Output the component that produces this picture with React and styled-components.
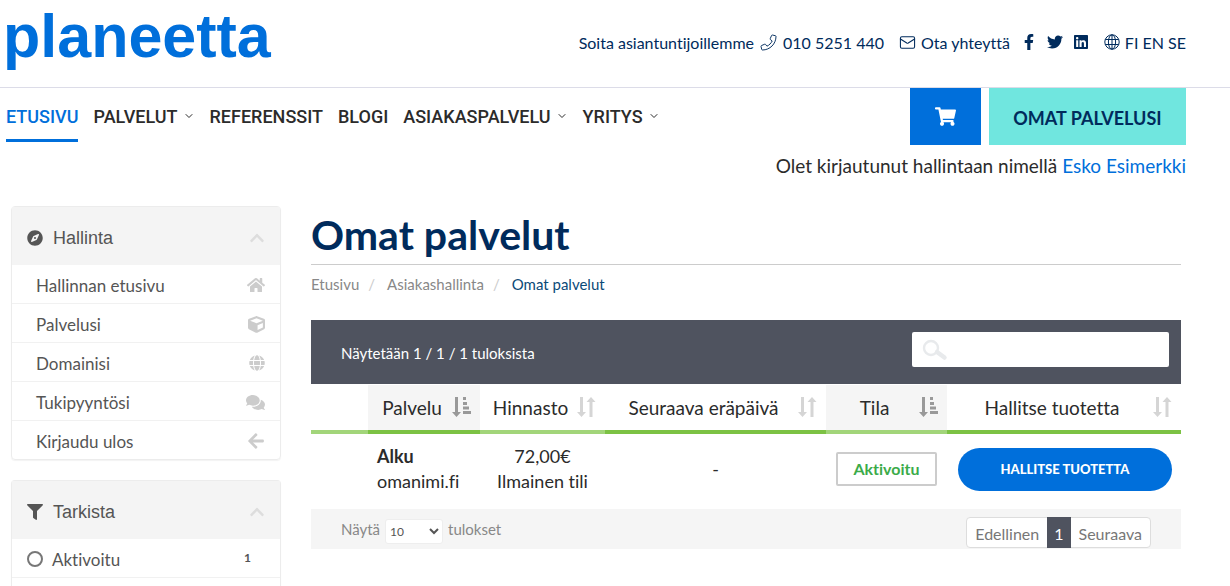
import React from 'react';
import styled, { createGlobalStyle, css } from 'styled-components';
import {
  FaArrowLeft,
  FaChevronUp,
  FaComments,
  FaCompass,
  FaCube,
  FaFacebookF,
  FaFilter,
  FaGlobe,
  FaHome,
  FaLinkedin,
  FaPhone,
  FaShoppingCart,
  FaTwitter,
} from 'react-icons/fa';
import { ChevronDown, Mail } from 'lucide-react';

const blue = '#006fdb';
const navy = '#002b5c';
const slate = '#4f535f';

const GlobalStyle = createGlobalStyle`
  * {
    box-sizing: border-box;
  }

  body {
    margin: 0;
    background: #fff;
    color: #2b2b2b;
    font-family: Lato, "Liberation Sans", sans-serif;
    font-size: 18px;
    font-variant-ligatures: none;
  }

  a {
    color: inherit;
    text-decoration: none;
  }
`;

const Page = styled.div`
  display: flex;
  flex-direction: column;
  min-height: 100vh;
`;

const TopBar = styled.header`
  display: flex;
  justify-content: space-between;
  height: 88px;
  padding: 0 44px 0 3px;
  border-bottom: 1px solid #dcdce8;
`;

const Logo = styled.a`
  color: ${blue};
  font-family: "Liberation Sans", sans-serif;
  font-size: 61px;
  font-weight: 700;
  line-height: 72px;
`;

const Contact = styled.div`
  display: flex;
  align-items: center;
  gap: 15px;
  height: 84px;
  color: ${navy};
  font-size: 16px;
`;

const ContactItem = styled.div`
  display: flex;
  align-items: center;
  gap: 5px;
`;

const Social = styled.div`
  display: flex;
  align-items: center;
  gap: 10px;
  margin-left: -4px;

  a {
    display: flex;
  }
`;

const OutlinePhone = styled(FaPhone)`
  fill: none;
  stroke: ${navy};
  stroke-width: 32px;
  overflow: visible;
  margin: 0 2px;
`;

const NavRow = styled.div`
  display: flex;
  justify-content: space-between;
  padding: 0 44px 0 6px;
`;

const Nav = styled.nav`
  display: flex;
  gap: 15px;
  height: 54px;
`;

const NavLink = styled.a`
  display: flex;
  align-items: center;
  gap: 5px;
  padding-top: 5px;
  border-bottom: 3px solid transparent;
  font-family: Roboto, "Liberation Sans", sans-serif;
  font-size: 18px;
  font-weight: 500;

  ${props => props.$active && css`
    color: ${blue};
    border-color: ${blue};
  `}
`;

const NavActions = styled.div`
  display: flex;
  gap: 8px;
`;

const CartButton = styled.button`
  display: flex;
  align-items: center;
  justify-content: center;
  width: 71px;
  height: 57px;
  border: 0;
  background: ${blue};
  color: #fff;
  font-size: 21px;
`;

const ServicesLink = styled.a`
  display: flex;
  align-items: center;
  justify-content: center;
  width: 197px;
  height: 57px;
  padding-top: 3px;
  background: #70e6df;
  color: ${navy};
  font-size: 18px;
  font-weight: 700;
`;

const LoginInfo = styled.div`
  padding: 8px 44px 0;
  font-size: 19px;
  line-height: 26px;
  text-align: right;

  a {
    color: ${blue};
  }
`;

const Content = styled.div`
  display: flex;
  flex: 1;
  gap: 30px;
  padding: 27px 49px 0 11px;
`;

const Sidebar = styled.aside`
  display: flex;
  flex-direction: column;
  gap: 20px;
  flex: 0 0 270px;
`;

const Panel = styled.section`
  border: 1px solid #ececec;
  border-radius: 4px;
  box-shadow: 0 1px 1px rgba(0, 0, 0, 0.05);
  color: #555;

  ${props => props.$fill && css`
    flex: 1;
    border-bottom: 0;
    border-radius: 4px 4px 0 0;
  `}
`;

const PanelHead = styled.h2`
  display: flex;
  align-items: center;
  gap: 10px;
  height: 58px;
  margin: 0;
  padding: 4px 15px 0;
  background: #f4f4f4;
  font-family: "Liberation Sans", sans-serif;
  font-size: 18px;
  font-weight: 400;
`;

const ToggleButton = styled.button`
  display: flex;
  margin-left: auto;
  padding: 0;
  border: 0;
  background: none;
  color: #ddd;
  font-size: 16px;
`;

const PanelRow = styled.a`
  display: flex;
  align-items: center;
  justify-content: space-between;
  height: 39px;
  padding: 2px 15px 0 24px;
  border-bottom: 1px solid #f1f1f1;
  font-size: 17px;

  &:last-child:not(label) {
    height: 38px;
    border-bottom: 0;
  }

  svg {
    color: #ccc;
  }
`;

const FilterRow = styled(PanelRow).attrs({ as: 'label' })`
  padding: 2px 29px 0 15px;
  justify-content: flex-start;
  gap: 9px;
`;

const Radio = styled.input`
  appearance: none;
  width: 16px;
  height: 16px;
  margin: 0;
  border: 2px solid #777;
  border-radius: 50%;
`;

const Count = styled.span`
  margin-left: auto;
  padding-bottom: 4px;
  font-size: 12px;
  font-weight: 700;
`;

const Main = styled.main`
  flex: 1;
  min-width: 0;
`;

const Title = styled.h1`
  margin: 0;
  border-bottom: 1px solid #ccc;
  color: ${navy};
  font-size: 41px;
  font-weight: 700;
  line-height: 58px;
`;

const Breadcrumb = styled.ol`
  display: flex;
  gap: 9px;
  margin: 0;
  padding: 8px 0 25px;
  list-style: none;
  color: #888;
  font-size: 15px;
  line-height: 22px;

  li + li::before {
    content: '/';
    margin-right: 12px;
    color: #ccc;
  }

  li:last-child {
    color: #0b4a78;
  }
`;

const TableInfo = styled.div`
  display: flex;
  align-items: center;
  justify-content: space-between;
  height: 64px;
  padding: 2px 12px 0 30px;
  margin-bottom: 1px;
  background: ${slate};
  color: #fff;
  font-size: 15px;
`;

const SearchBox = styled.label`
  display: flex;
  align-items: center;
  gap: 8px;
  width: 257px;
  height: 35px;
  margin-bottom: 7px;
  padding: 0 10px;
  border-radius: 2px;
  background: #fff;
`;

const SearchInput = styled.input`
  flex: 1;
  min-width: 0;
  border: 0;
  outline: 0;
  font: inherit;
`;

const Table = styled.table`
  width: 100%;
  table-layout: fixed;
  border-collapse: collapse;
`;

const Th = styled.th`
  height: 47px;
  padding: 0;
  border-bottom: 4px solid ${props => (props.$light ? '#a2d57a' : '#7cc244')};
  background: ${props => (props.$sorted ? '#f5f5f5' : '#fff')};
  font-size: 19px;
  font-weight: 400;
`;

const SortButton = styled.button`
  display: flex;
  align-items: center;
  width: 100%;
  padding: 0 9px 0 4px;
  border: 0;
  background: none;
  color: inherit;
  font: inherit;
  line-height: 24px;

  span {
    flex: 1;
    text-align: center;
    white-space: nowrap;
  }

  svg {
    flex: none;
    margin-bottom: 2px;
  }
`;

const Td = styled.td`
  height: 77px;
  padding: 0 9px 5px;
  border-top: 1px solid #ddd;
  text-align: ${props => props.$align || 'center'};
  line-height: 25px;
`;

const Status = styled.span`
  display: block;
  width: 101px;
  margin: 0 auto;
  border: 2px solid #ccc;
  border-radius: 2px;
  color: #3bab49;
  font-size: 16px;
  font-weight: 700;
  line-height: 30px;
`;

const ManageButton = styled.button`
  display: block;
  width: 214px;
  height: 43px;
  margin-left: auto;
  border: 0;
  border-radius: 22px;
  background: ${blue};
  color: #fff;
  font-family: inherit;
  font-size: 13px;
  font-weight: 900;
`;

const TableFooter = styled.div`
  display: flex;
  justify-content: space-between;
  height: 40px;
  padding: 0 30px;
  background: #f5f5f5;
  color: #888;
  font-size: 15px;
`;

const LengthLabel = styled.label`
  display: flex;
  align-items: center;
  gap: 5px;
`;

const LengthSelect = styled.select`
  width: 58px;
  height: 25px;
  margin-top: 4px;
  border: 1px solid #eee;
  border-radius: 3px;
  background: #fff;
  color: #555;
  font-family: inherit;
  font-size: 12px;
`;

const Pager = styled.div`
  display: flex;
  height: 31px;
  margin-top: 8px;
  border: 1px solid #ddd;
  border-radius: 4px;
  background: #fff;
`;

const PageButton = styled.button`
  margin: ${props => (props.$current ? '-1px 0' : '0')};
  padding: 2px ${props => (props.$current ? 7 : 8)}px 0;
  border: 0;
  background: ${props => (props.$current ? slate : 'none')};
  color: ${props => (props.$current ? '#fff' : '#777')};
  font-family: inherit;
  font-size: 16px;
`;

const GlobeOutline = () => (
  <svg width="16" height="16" viewBox="0 0 16 16" fill="none" stroke="currentColor">
    <circle cx="8" cy="8" r="7.2" />
    <ellipse cx="8" cy="8" rx="3.6" ry="7.2" />
    <path d="M1.3 5.5h13.4M1.3 10.5h13.4M8 1v14" />
  </svg>
);

const SearchIcon = () => (
  <svg width="26" height="22" viewBox="0 0 26 22" fill="none" stroke="#e8eaec">
    <circle cx="9" cy="9" r="7" strokeWidth="2.4" />
    <path d="M15 13l7.5 5.5" strokeWidth="4.5" strokeLinecap="round" />
  </svg>
);

const SortIcon = ({ sorted }) => (
  <svg width="19" height="20" viewBox="0 0 19 20" fill={sorted ? '#999' : '#d5d5d5'}>
    <path d="M3 0h3v15h3l-4.5 5L0 15h3z" />
    {sorted ? (
      <path d="M11 0h3v3h-3zM11 5h4v3h-4zM11 9.500h6v3h-6zM11 14h8v3h-8z" />
    ) : (
      <path d="M12.500 20h3V5h3L14 0 9.500 5h3z" />
    )}
  </svg>
);

const navItems = [
  { label: 'ETUSIVU', active: true },
  { label: 'PALVELUT', menu: true },
  { label: 'REFERENSSIT' },
  { label: 'BLOGI' },
  { label: 'ASIAKASPALVELU', menu: true },
  { label: 'YRITYS', menu: true },
];

const sideItems = [
  { label: 'Hallinnan etusivu', icon: <FaHome size={18} /> },
  { label: 'Palvelusi', icon: <FaCube size={17} /> },
  { label: 'Domainisi', icon: <FaGlobe size={16} /> },
  { label: 'Tukipyyntösi', icon: <FaComments size={19} /> },
  { label: 'Kirjaudu ulos', icon: <FaArrowLeft size={18} /> },
];

const columns = [
  { label: 'Palvelu', width: 112, sorted: true },
  { label: 'Hinnasto', width: 125, light: true },
  { label: 'Seuraava eräpäivä', width: 221 },
  { label: 'Tila', width: 121, sorted: true, light: true },
  { label: 'Hallitse tuotetta', width: 234 },
];

const App = () => (
  <Page>
    <GlobalStyle />
    <TopBar>
      <Logo href="#">planeetta</Logo>
      <Contact>
        <ContactItem>
          Soita asiantuntijoillemme
          <OutlinePhone size={15} />
          <a href="#puhelin">010 5251 440</a>
        </ContactItem>
        <ContactItem as="a" href="#yhteys">
          <Mail size={17} strokeWidth={1.5} />
          Ota yhteyttä
        </ContactItem>
        <Social>
          <a href="#facebook" aria-label="Facebook"><FaFacebookF size={16} /></a>
          <a href="#twitter" aria-label="Twitter"><FaTwitter size={16} /></a>
          <a href="#linkedin" aria-label="LinkedIn"><FaLinkedin size={16} /></a>
        </Social>
        <ContactItem>
          <GlobeOutline />
          <span><a href="#fi">FI</a> <a href="#en">EN</a> <a href="#se">SE</a></span>
        </ContactItem>
      </Contact>
    </TopBar>

    <NavRow>
      <Nav>
        {navItems.map(item => (
          <NavLink key={item.label} href="#" $active={item.active}>
            {item.label}
            {item.menu && <ChevronDown size={12} strokeWidth={2} />}
          </NavLink>
        ))}
      </Nav>
      <NavActions>
        <CartButton aria-label="Ostoskori"><FaShoppingCart /></CartButton>
        <ServicesLink href="#">OMAT PALVELUSI</ServicesLink>
      </NavActions>
    </NavRow>
    <LoginInfo>
      Olet kirjautunut hallintaan nimellä <a href="#">Esko Esimerkki</a>
    </LoginInfo>

    <Content>
      <Sidebar>
        <Panel>
          <PanelHead>
            <FaCompass size={16} />
            Hallinta
            <ToggleButton aria-label="Piilota"><FaChevronUp /></ToggleButton>
          </PanelHead>
          {sideItems.map(item => (
            <PanelRow key={item.label} href="#">
              {item.label}
              {item.icon}
            </PanelRow>
          ))}
        </Panel>
        <Panel $fill>
          <PanelHead>
            <FaFilter size={16} />
            Tarkista
            <ToggleButton aria-label="Piilota"><FaChevronUp /></ToggleButton>
          </PanelHead>
          <FilterRow>
            <Radio type="radio" name="tila" />
            Aktivoitu
            <Count>1</Count>
          </FilterRow>
        </Panel>
      </Sidebar>

      <Main>
        <Title>Omat palvelut</Title>
        <Breadcrumb>
          <li><a href="#">Etusivu</a></li>
          <li><a href="#">Asiakashallinta</a></li>
          <li>Omat palvelut</li>
        </Breadcrumb>

        <TableInfo>
          Näytetään 1 / 1 / 1 tuloksista
          <SearchBox>
            <SearchIcon />
            <SearchInput type="text" aria-label="Haku" />
          </SearchBox>
        </TableInfo>
        <Table>
          <colgroup>
            <col style={{ width: 57 }} />
            {columns.map(col => <col key={col.label} style={{ width: col.width }} />)}
          </colgroup>
          <thead>
            <tr>
              <Th $light />
              {columns.map(col => (
                <Th key={col.label} $sorted={col.sorted} $light={col.light}>
                  <SortButton>
                    <span>{col.label}</span>
                    <SortIcon sorted={col.sorted} />
                  </SortButton>
                </Th>
              ))}
            </tr>
          </thead>
          <tbody>
            <tr>
              <Td />
              <Td $align="left">
                <strong>Alku</strong>
                <br />
                omanimi.fi
              </Td>
              <Td>
                72,00€
                <br />
                Ilmainen tili
              </Td>
              <Td>-</Td>
              <Td><Status>Aktivoitu</Status></Td>
              <Td><ManageButton>HALLITSE TUOTETTA</ManageButton></Td>
            </tr>
          </tbody>
        </Table>
        <TableFooter>
          <LengthLabel>
            Näytä
            <LengthSelect defaultValue="10">
              <option>10</option>
              <option>25</option>
              <option>50</option>
            </LengthSelect>
            tulokset
          </LengthLabel>
          <Pager>
            <PageButton>Edellinen</PageButton>
            <PageButton $current>1</PageButton>
            <PageButton>Seuraava</PageButton>
          </Pager>
        </TableFooter>
      </Main>
    </Content>
  </Page>
);

export default App;
